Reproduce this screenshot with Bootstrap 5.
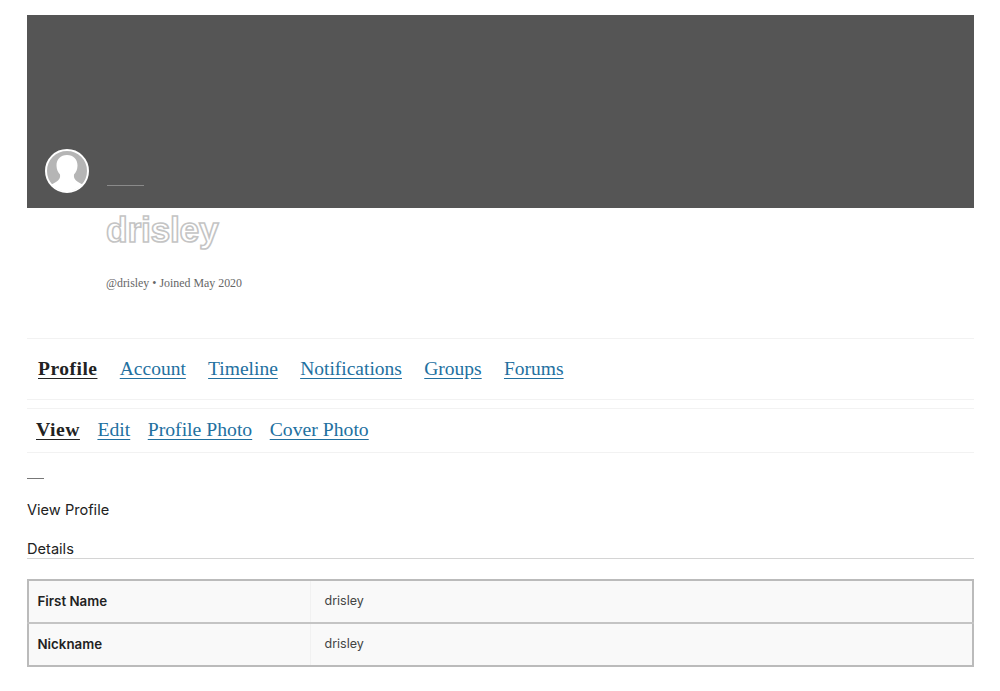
<!doctype html>
<html lang="en">
<head>
<meta charset="utf-8">
<title>drisley</title>
<link href="https://cdn.jsdelivr.net/npm/bootstrap@5.3.0/dist/css/bootstrap.min.css" rel="stylesheet">
<style>
body{background:#fff;color:#222;font-family:Inter,"Liberation Sans",sans-serif;}
.page-wrap{padding:15px 26px 0 27px;}
.cover-box{height:193px;background:#555;padding:0 0 15px 18px;}
.avatar-pic{width:44px;height:44px;display:block;margin-bottom:0;}
.cover-rule{width:37px;height:1px;background:#8a8a8a;margin:0 0 7px 18px;}
.profile-info{padding-left:79px;height:128px;}
.user-name{font-family:"Liberation Sans",sans-serif;font-weight:700;font-size:35.5px;line-height:40px;color:#fff;-webkit-text-stroke:1.6px #c4c4c4;margin:2px 0 0;letter-spacing:-.3px;}
.user-meta{font-family:"Liberation Serif",serif;font-size:11.9px;line-height:14px;color:#666;margin:26px 0 0;}
.primary-nav,.sub-nav{font-family:"Liberation Serif",serif;}
.primary-nav{border-top:1px solid #f2f2f2;border-bottom:1px solid #f2f2f2;height:62px;padding-left:11px;gap:22.3px;font-size:19.5px;margin-bottom:8px;}
.sub-nav{border-top:1px solid #f2f2f2;border-bottom:1px solid #f2f2f2;height:45px;padding:0 0 2px 9px;gap:17.5px;font-size:19.7px;}
.primary-nav a,.sub-nav a{color:#22709f;text-decoration:underline;text-underline-offset:3px;}
.primary-nav a.on,.sub-nav a.on{color:#222;font-weight:700;letter-spacing:.5px;}
.short-rule{width:17px;height:1px;background:#777;margin:25px 0 0;}
.view-title{font-size:14.6px;line-height:20px;margin:21px 0 0;font-weight:400;}
.details-title{font-size:14.6px;line-height:20px;margin:19px 0 0;font-weight:400;padding-bottom:0;border-bottom:1px solid #d4d4d4;height:20px;}
.profile-table{margin:20px 0 0;border:2px solid #bbb;font-size:12.5px;--bs-table-bg:#f9f9f9;table-layout:fixed;width:100%;}
.profile-table td{height:43px;padding:0 8.5px;vertical-align:middle;border-bottom:2px solid #c4c4c4;color:#444;}
.profile-table tr:last-child td{border-bottom:0;}
.profile-table td.field-name{width:282px;font-weight:600;font-size:13.3px;color:#222;border-right:1px solid #f1f1f1;}
.profile-table td.field-val{padding-left:14px;}
</style>
</head>
<body>
<div class="page-wrap">
  <header class="cover-box d-flex align-items-end">
    <svg class="avatar-pic" viewBox="0 0 44 44" aria-hidden="true">
      <circle cx="22" cy="22" r="21" fill="#b5b5b5" stroke="#fff" stroke-width="2"/>
      <path d="M22 6c-6.500 0-10.500 4.500-10.500 10.500 0 4 1.500 7 3.500 9 .5 2.500-.5 4.500-2 6-1.500 1.300-4 2.500-6.500 4 3.500 4 9 7 15.500 7s12-3 15.500-7c-2.500-1.500-5-2.700-6.500-4-1.500-1.500-2.500-3.500-2-6 2-2 3.500-5 3.500-9C32.500 10.500 28.500 6 22 6z" fill="#fff"/>
    </svg>
    <div class="cover-rule"></div>
  </header>
  <div class="profile-info">
    <h1 class="user-name">drisley</h1>
    <p class="user-meta">@drisley • Joined May 2020</p>
  </div>
  <nav class="primary-nav d-flex align-items-center">
    <a class="on" href="#">Profile</a><a href="#">Account</a><a href="#">Timeline</a><a href="#">Notifications</a><a href="#">Groups</a><a href="#">Forums</a>
  </nav>
  <nav class="sub-nav d-flex align-items-center">
    <a class="on" href="#">View</a><a href="#">Edit</a><a href="#">Profile Photo</a><a href="#">Cover Photo</a>
  </nav>
  <div class="short-rule"></div>
  <h2 class="view-title">View Profile</h2>
  <h3 class="details-title">Details</h3>
  <table class="table profile-table">
    <tbody>
      <tr><td class="field-name">First Name</td><td class="field-val">drisley</td></tr>
      <tr><td class="field-name">Nickname</td><td class="field-val">drisley</td></tr>
    </tbody>
  </table>
</div>
<script src="https://cdn.jsdelivr.net/npm/bootstrap@5.3.0/dist/js/bootstrap.bundle.min.js"></script>
</body>
</html>
